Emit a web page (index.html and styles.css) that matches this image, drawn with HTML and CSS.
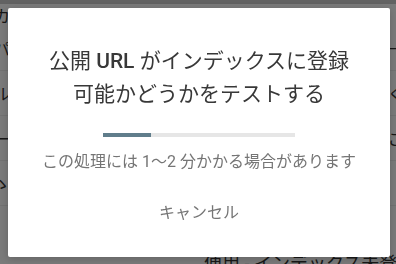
FILE: index.html
```html
<!DOCTYPE html>
<html lang="ja">
<head>
    <meta charset="UTF-8">
    <meta name="viewport" content="width=device-width, initial-scale=1.0">
    <title>URL 検査</title>
    <link rel="stylesheet" href="styles.css">
</head>
<body>
    <div class="page">
        <div class="topbar"></div>
        <div class="row row-head"><span class="cell-left">カ</span><span class="cell-right"></span></div>
        <div class="row"><span class="cell-left">パ</span><span class="cell-right">一</span></div>
        <div class="row"><span class="cell-left">ル</span><span class="cell-right">ぐ</span></div>
        <div class="row"><span class="cell-left">ー</span><span class="cell-right">ご</span></div>
        <div class="row row-last"><span class="cell-left">ゝ</span><span class="cell-right"></span></div>
        <div class="footer-text">便用 - インデックス未登録</div>
    </div>

    <div class="scrim"></div>

    <div class="dialog" role="dialog">
        <h1 class="dialog-title">公開 <span class="latin">URL</span> がインデックスに登録<br>可能かどうかをテストする</h1>
        <div class="progress">
            <div class="progress-fill" style="width: 25%"></div>
        </div>
        <p class="dialog-note">この処理には 1〜2 分かかる場合があります</p>
        <button class="cancel">キャンセル</button>
    </div>
</body>
</html>
```

FILE: styles.css
```css
body {
    margin: 0;
    font-family: Roboto, "Noto Sans CJK JP", sans-serif;
    width: 396px;
    height: 264px;
    overflow: hidden;
}
.page {
    background: #f6f6f6;
    width: 396px;
    height: 264px;
    overflow: hidden;
    color: #303030;
}
.topbar {
    height: 4px;
    background: #c4c4c4;
}
.row {
    display: flex;
    justify-content: space-between;
    align-items: center;
    height: 44px;
    border-bottom: 1px solid #e6e6e6;
    font-size: 16px;
}
.row-head {
    height: 22px;
    border-bottom: none;
}
.cell-left {
    margin-left: -6px;
}
.cell-right {
    margin-right: -8px;
}
.footer-text {
    margin-top: 46px;
    padding-left: 204px;
    font-size: 18px;
    line-height: 24px;
    white-space: nowrap;
    color: #303030;
}
.scrim {
    position: fixed;
    inset: 0;
    background: rgba(0, 0, 0, 0.5);
}
.dialog {
    position: absolute;
    left: 8px;
    top: 8px;
    width: 382px;
    height: 249px;
    background: white;
    border-radius: 2px;
    box-shadow: 0 2px 8px rgba(0, 0, 0, 0.2);
    display: flex;
    flex-direction: column;
    align-items: center;
    box-sizing: border-box;
    padding-top: 37px;
}
.dialog-title {
    margin: 0;
    font-size: 21px;
    font-weight: 400;
    line-height: 33px;
    color: #383838;
    text-align: center;
}
.latin {
    font-weight: 500;
}
.progress {
    margin-top: 22px;
    width: 192px;
    height: 4px;
    background: #e6e6e6;
}
.progress-fill {
    height: 100%;
    background: #607d8b;
}
.dialog-note {
    margin: 15px 0 0;
    font-size: 16px;
    line-height: 20px;
    color: #757575;
}
.cancel {
    margin-top: 23px;
    background: none;
    border: none;
    padding: 8px 12px;
    font-family: Roboto, "Noto Sans CJK JP", sans-serif;
    font-size: 16px;
    line-height: 20px;
    color: #757575;
    cursor: pointer;
}
```
